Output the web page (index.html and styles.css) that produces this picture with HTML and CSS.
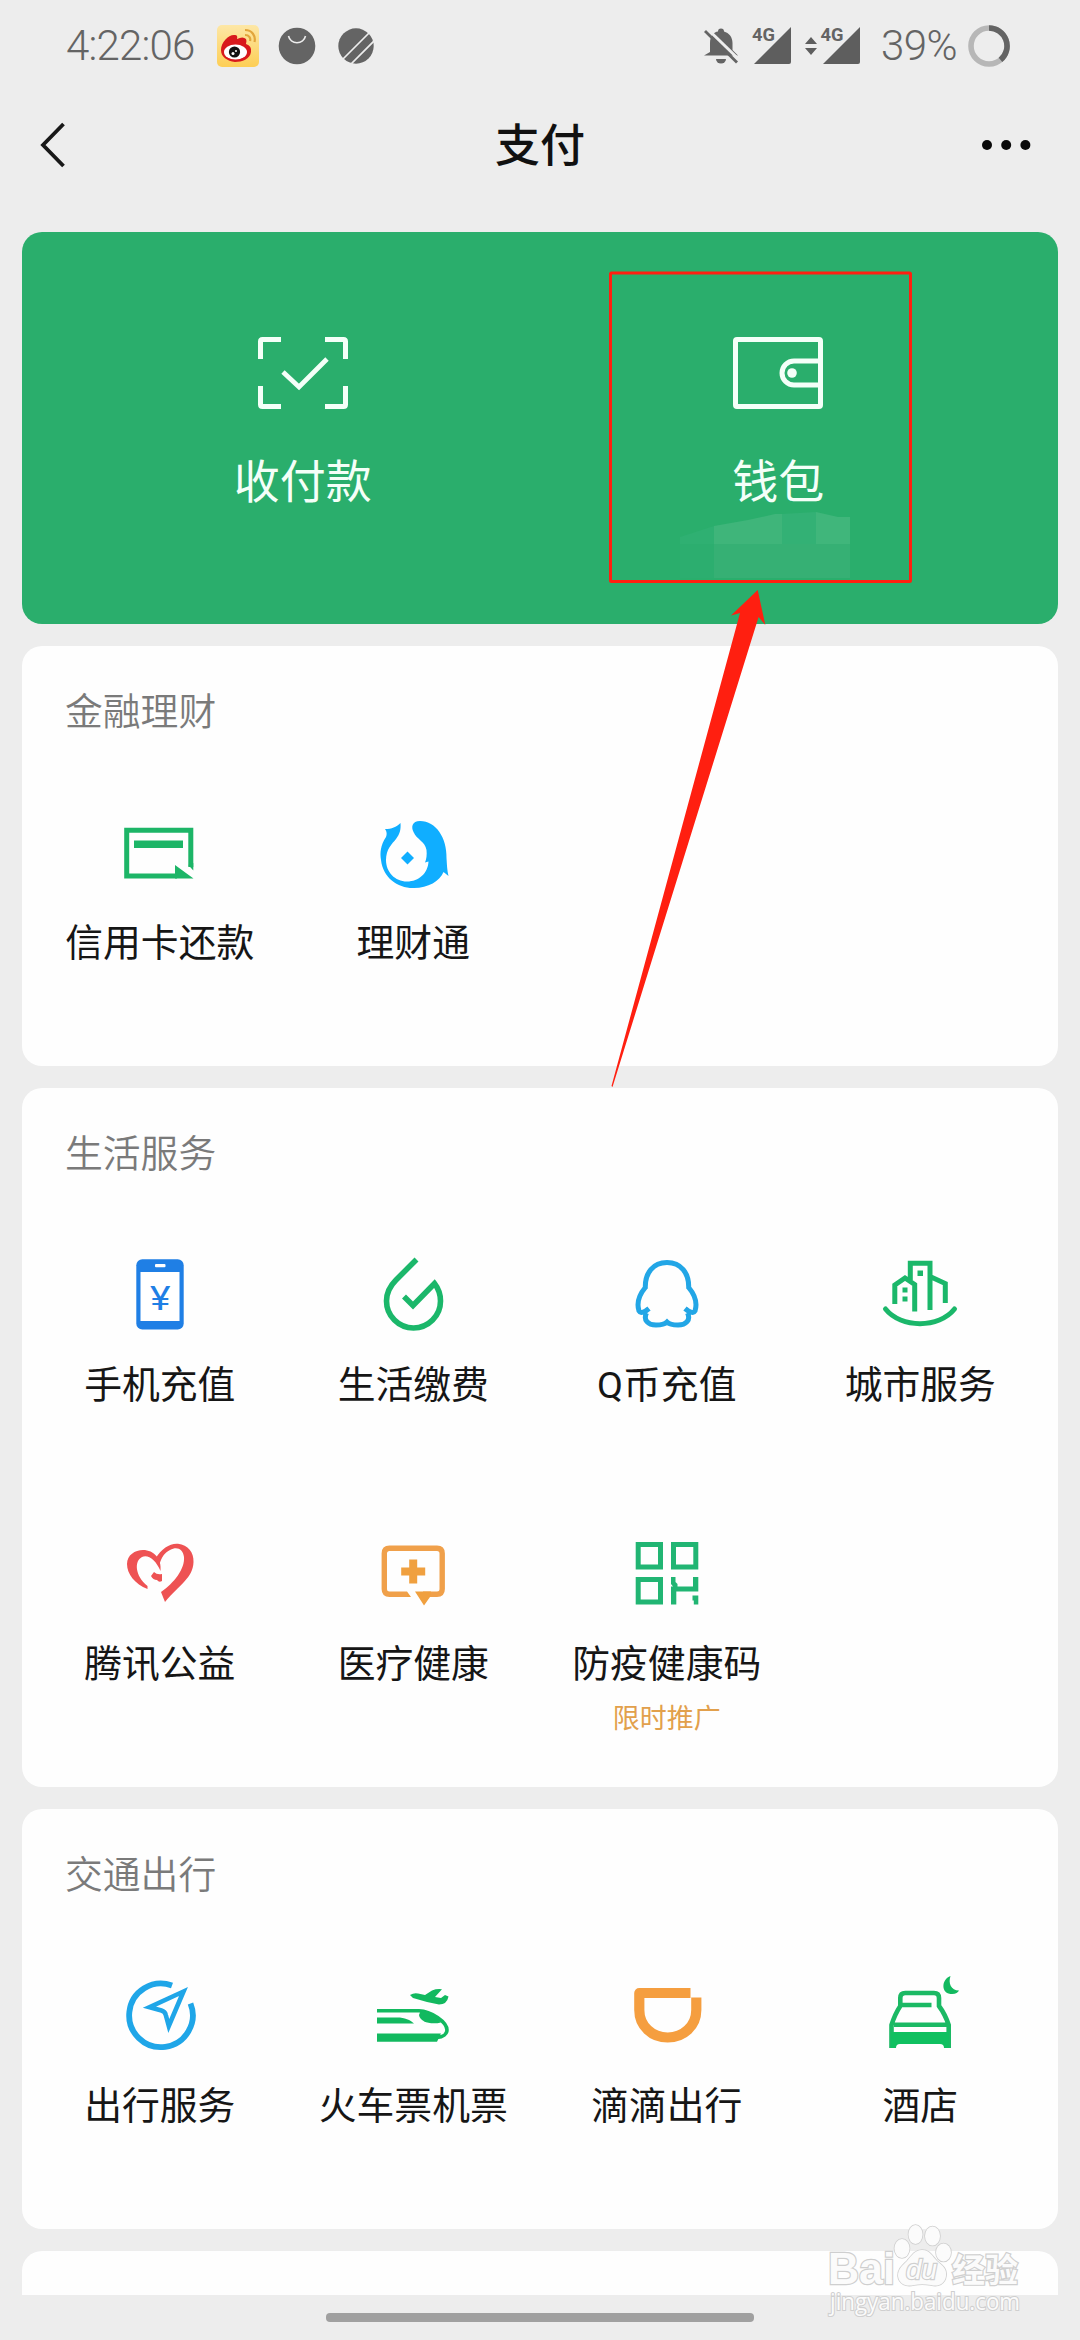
FILE: index.html
```html
<!DOCTYPE html>
<html lang="zh-CN">
<head>
<meta charset="utf-8">
<title>支付</title>
<link rel="stylesheet" href="styles.css">
</head>
<body>
<div class="screen">
  <div class="status">
    <div class="status-left">
      <span class="clock">4:22:06</span>
      <svg class="app-weibo" width="42" height="42" viewBox="0 0 42 42">
        <defs><linearGradient id="wb" x1="0" y1="0" x2="0" y2="1"><stop offset="0" stop-color="#fde7a6"/><stop offset="1" stop-color="#fdce55"/></linearGradient></defs>
        <rect width="42" height="42" rx="5" fill="url(#wb)"/>
        <path d="M4 25C4 17 12 9 18 10q3 0 2 4 6-3 9 0 1 2 0 5 6 2 5 8C33 34 25 37 18 37 10 36 4 32 4 25z" fill="#d8191c"/>
        <ellipse cx="18.500" cy="27" rx="11.500" ry="7.500" fill="#fff"/>
        <circle cx="17.500" cy="27" r="5.600" fill="#111"/>
        <circle cx="16" cy="28.500" r="1.500" fill="#fff"/><circle cx="19" cy="26" r="1" fill="#fff"/>
        <path d="M28 5c7 0 11 6 9.500 12M28 10c4 0 6 3 5 6" fill="none" stroke="#e2a53c" stroke-width="2.200"/>
      </svg>
      <svg class="app-bag" width="38" height="38" viewBox="0 0 38 38">
        <circle cx="19" cy="19" r="18.300" fill="#646464"/>
        <path d="M10.500 9a8.700 8.500 0 0 0 17 0" fill="none" stroke="#ededed" stroke-width="1.600"/>
      </svg>
      <svg class="app-lines" width="38" height="38" viewBox="0 0 38 38">
        <circle cx="19" cy="19" r="17.700" fill="#646464"/>
        <path d="M6 32L34 4M13 38L39 12" stroke="#ededed" stroke-width="1.700"/>
      </svg>
    </div>
    <div class="status-right">
      <svg class="bell" width="36" height="36" viewBox="0 0 36 36">
        <path d="M7 24V15C7 8 11 4 15 3.500a3 3 0 0 1 6 0C26 5 29.500 9 29.500 15V22L35 27.500H1z" fill="#646464"/>
        <path d="M13 31h10a5 4.500 0 0 1-10 0z" fill="#646464"/>
        <path d="M4 .500L36.500 32" stroke="#ededed" stroke-width="3"/>
        <path d="M2 3L34 34.500" stroke="#646464" stroke-width="2.800"/>
      </svg>
      <svg class="sim1" width="40" height="40" viewBox="0 0 40 40">
        <path d="M1 38L38 1V36Q38 38 36 38z" fill="#5e5e5e"/>
        <text class="net" x="-1" y="15" textLength="23" lengthAdjust="spacingAndGlyphs">4G</text>
      </svg>
      <svg class="updown" width="14" height="20" viewBox="0 0 14 20"><path d="M1 8L7 1l6 7zM1 12h12l-6 7z" fill="#5e5e5e"/></svg>
      <svg class="sim2" width="40" height="40" viewBox="0 0 40 40">
        <path d="M1 38L38 1V36Q38 38 36 38z" fill="#5e5e5e"/>
        <text class="net" x="-1.500" y="15" textLength="23" lengthAdjust="spacingAndGlyphs">4G</text>
      </svg>
      <span class="battery">39%</span>
      <svg class="ring" width="42" height="42" viewBox="0 0 42 42">
        <circle cx="21" cy="21" r="18" fill="none" stroke="#b7b7b7" stroke-width="5.600"/>
        <path d="M21 3A18 18 0 0 1 32.500 34.900" fill="none" stroke="#646464" stroke-width="5.600"/>
      </svg>
    </div>
  </div>

  <div class="nav">
    <svg width="30" height="50" viewBox="0 0 30 50"><path d="M25.500 4L5 25l20.500 21" fill="none" stroke="#181818" stroke-width="3.800"/></svg>
    <h1>支付</h1>
    <svg width="52" height="14" viewBox="0 0 52 14"><g fill="#0a0a0a"><circle cx="7" cy="7" r="5"/><circle cx="26.200" cy="7" r="5"/><circle cx="45.400" cy="7" r="5"/></g></svg>
  </div>

  <main class="cards">
    <section class="pay">
      <div class="pay-item">
        <svg width="100" height="76" viewBox="0 0 100 76" fill="none" stroke="#f4fff8" stroke-width="5">
          <path d="M7.500 24V6.500Q7.500 4.500 9.500 4.500H28M72 4.500h18.500q2 0 2 2V24M92.500 51V69.500q0 2-2 2H72M28 71.500H9.500q-2 0-2-2V51"/>
          <path d="M30 37L46 52 74 24" stroke-width="4.800"/>
        </svg>
        <span>收付款</span>
      </div>
      <div class="pay-item">
        <svg width="100" height="76" viewBox="0 0 100 76" fill="none" stroke="#f4fff8" stroke-width="5">
          <rect x="7.500" y="4.500" width="85" height="67" rx="1.500"/>
          <path d="M92 26H66a12 12 0 0 0 0 24H92" stroke-width="5"/>
          <circle cx="64" cy="38" r="4.800" fill="#f4fff8" stroke="none"/>
        </svg>
        <span>钱包</span>
      </div>
      <svg class="mosaic" width="172" height="68" viewBox="680 511 172 68">
        <path d="M680 537l34-11v18h-34z" fill="#2fb072"/>
        <path d="M714 526l34-6 27-6h7v30h-68z" fill="#3fb57a"/>
        <path d="M782 514l34-2v32h-34z" fill="#33b175"/>
        <path d="M816 512l22 5h12v27h-34z" fill="#40b67b"/>
        <path d="M680 544h34v34h-34z" fill="#2cae6f"/>
        <path d="M714 544h136v34H714z" fill="#36b074"/>
      </svg>
    </section>

    <section class="card">
      <h2>金融理财</h2>
      <div class="grid">
        <div class="item">
          <svg class="icon" viewBox="0 0 100 100">
            <path d="M80.800 64V27.300H16.700V73H67" fill="none" stroke="#1db567" stroke-width="5"/>
            <path d="M78.300 62l5 5.500V60z M65 62l18.500 13.500H65z M24 37.500h49V45H24z" fill="#1db567"/>
          </svg>
          <span>信用卡还款</span>
        </div>
        <div class="item">
          <svg class="icon" viewBox="0 0 100 100" fill="#10aeff">
            <path d="M37.500 20C33 24 29 26 22 26C24 29 24 31 23 34C17.500 42 16.800 50 18 57C20 75 35 85.500 51 85C65 85 77 78 80.500 69L85.500 73C84 66 84 62 83.500 55C84 35 73 18 57 18C49 18 48 24 50.500 29C54 37 62 38 63.500 47C64 52 63.500 56 62 59.500L65.500 58.500C65 70 56 78.500 44 78.500C32 78.500 23 69 23 57C23 46 29 41 33 36C37 31 38 26 37.500 20z"/>
            <path d="M44.500 48.500l6.500 6.500-6.500 6.500L38 55z"/>
          </svg>
          <span>理财通</span>
        </div>
      </div>
    </section>

    <section class="card">
      <h2>生活服务</h2>
      <div class="grid">
        <div class="item">
          <svg class="icon" viewBox="0 0 100 100">
            <rect x="26.300" y="14.300" width="47.400" height="70.200" rx="6" fill="#1f7fe5"/>
            <path d="M30.500 27h39v49h-39z" fill="#fff"/>
            <rect x="45" y="19" width="10.500" height="3.200" rx="1" fill="#fff"/>
            <text class="yen" x="40" y="64.500" textLength="20.500" lengthAdjust="spacingAndGlyphs">¥</text>
          </svg>
          <span>手机充值</span>
        </div>
        <div class="item">
          <svg class="icon" viewBox="0 0 100 100" fill="none" stroke="#1bb76a" stroke-width="5.600">
            <path d="M53.500 14.500L33 35C26 42 23.500 49 23.500 56A27 27 0 0 0 77.500 56C77.500 49 75 43 71.500 38.500L50 60.500 41 51.500"/>
          </svg>
          <span>生活缴费</span>
        </div>
        <div class="item">
          <svg class="icon" viewBox="0 0 100 100" fill="none" stroke="#22a6e6" stroke-width="5">
            <path d="M50 17.500C36 17.500 28 28 28.300 42.500C22 50 19.500 58 22 66C23.500 69 28 67 32 63.500M50 17.500C64 17.500 72 28 71.700 42.500C78 50 80.500 58 78 66C76.500 69 72 67 68 63.500M29.500 68C26 75 31 80 39 80C44 80 48 79 50 77C52 79 56 80 61 80C69 80 74 75 70.500 68"/>
          </svg>
          <span>Q币充值</span>
        </div>
        <div class="item">
          <svg class="icon" viewBox="0 0 100 100">
            <g fill="none" stroke="#1bb76a" stroke-width="5">
              <path d="M24.800 59V40L35 33 44.700 39.500V66.500M40.300 35V18.300H60V65M60 31.500L75.300 38.500V58"/>
              <path d="M15.500 64C31 83.500 69 83.500 84.500 64" stroke-linecap="round"/>
            </g>
            <path d="M32.500 42.500h5v5h-5zM32.500 51.500h5v5h-5zM47.500 25.500h5.500v5.500h-5.500z" fill="#1bb76a"/>
          </svg>
          <span>城市服务</span>
        </div>
        <div class="item">
          <svg class="icon" viewBox="0 0 100 100" fill="#ee5253">
            <path d="M37.500 65C25 60 17 50 17 40C17 31 25 26 33 26C44 26 52 35 50.500 47C46 36 38 30 32 33C24 37 25 52 37.500 62z"/>
            <path d="M45 35C52 24 60 19 68 19.700C78 21 84 28 83.500 38C83 54 70 60 55 78L51 68C64 59 75 45 74 33C73 25 67 22 60 26C54 29 52 33 49.500 40z"/>
            <path d="M41 52l3-4q3 3 8 2v7q-3 2-5-1-4 0-6-4z"/>
          </svg>
          <span>腾讯公益</span>
        </div>
        <div class="item">
          <svg class="icon" viewBox="0 0 100 100">
            <path d="M44 70.200H26.500q-5.200 0-5.200-5.200V29.500q0-5.200 5.200-5.200H74q5.200 0 5.200 5.200V65q0 5.200-5.200 5.200H60" fill="none" stroke="#f0a04a" stroke-width="5.400"/>
            <path d="M44 67.500v5.400h4zM52 67.500h16l-1 5.400-6 8.500z M46.200 35.500h8v8h8v8h-8v8h-8v-8h-8v-8h8z" fill="#f0a03f"/>
          </svg>
          <span>医疗健康</span>
        </div>
        <div class="item">
          <svg class="icon" viewBox="0 0 100 100">
            <path d="M21.200 20.500H43.500V43H21.200zM56.500 20.500H78.800V43H56.500zM21.200 55.500H43.500V78H21.200z" fill="none" stroke="#21b573" stroke-width="5"/>
            <path d="M54 53h4.500v5l2 2v2.500H76V53h5.300v14.500H59.300V80.500H54V62.500h2L54 60zM75.500 71.500h5.800v9h-4.500v-4h-1.300z" fill="#21b573"/>
          </svg>
          <span>防疫健康码</span>
          <em>限时推广</em>
        </div>
      </div>
    </section>

    <section class="card">
      <h2>交通出行</h2>
      <div class="grid">
        <div class="item">
          <svg class="icon" viewBox="0 0 100 100" fill="none" stroke="#1fa6e8">
            <path d="M62 19.500A31.800 31.800 0 1 0 80.500 37.500" stroke-width="5.800"/>
            <path d="M73.500 25.500L39.500 41.200 51.500 44.500Q55 45.500 55.800 49L58.800 60z" stroke-width="4.600"/>
          </svg>
          <span>出行服务</span>
        </div>
        <div class="item">
          <svg class="icon" viewBox="0 0 100 100" fill="#12b95f">
            <path d="M14 44.700H56C68 45 84 56 84 64C84 68 80 71 74 71.500" fill="none" stroke="#12b95f" stroke-width="3.600"/>
            <path d="M58 44C66 45 73 50 78 56.500C68 59 57 56 56 49z"/>
            <path d="M14 51.500H34C42 51.500 47 54 51 57.500H14z"/>
            <path d="M14 67.500H78L74 75.700H14z"/>
            <path d="M47 29Q51 26.500 55 27.500L62 29 69 24.500Q74 22.500 79 23.300L72 31 78 32 82 29 85.500 30.500Q84 38.500 76 38.500L64 36 50 32z"/>
          </svg>
          <span>火车票机票</span>
        </div>
        <div class="item">
          <svg class="icon" viewBox="0 0 100 100" fill="none" stroke="#f59e3f" stroke-width="10.200" stroke-linejoin="round">
            <path d="M73.500 27H22.300V44C22.300 60 35 71.500 50.700 71.500S79.300 60 79.300 44V31.500"/>
          </svg>
          <span>滴滴出行</span>
        </div>
        <div class="item">
          <svg class="icon" viewBox="0 0 100 100">
            <g fill="none" stroke="#1bb964" stroke-width="4.600">
              <path d="M21.500 82V59Q25 48 30.300 40V32q0-5 5-5H64q5 0 5 5V40Q75 48 78.700 59V82M30 39H61.500M24 58.700H77"/>
            </g>
            <path d="M21 66q0 0 5 0H74q4 0 5 0V82H74Q74 78 70 78H30Q26 78 26 82H21z" fill="#10c060"/>
            <path d="M80.500 10C72 13 71 25 78.500 27.500C84 29 88 27 89 24.500C81 24.500 78 17 80.500 10z" fill="#12b95f"/>
          </svg>
          <span>酒店</span>
        </div>
      </div>
    </section>

    <section class="card card-next"></section>
  </main>
  <div class="home-bar"></div>

  <svg class="marks" width="1080" height="2340" viewBox="0 0 1080 2340">
    <rect x="610.500" y="273" width="300" height="308.500" rx="1" fill="none" stroke="#ff1f10" stroke-width="3"/>
    <path d="M757.700 590L765.300 625 758.600 617 612.500 1087 611.500 1086 740 613 731 615.500z" fill="#ff1f10"/>
    <g class="wm">
      <text class="wm-brand" x="828" y="2284" textLength="67" lengthAdjust="spacingAndGlyphs">Bai</text>
      <ellipse cx="902" cy="2248.500" rx="7.500" ry="9.500"/>
      <ellipse cx="915.500" cy="2234.500" rx="7" ry="9.500"/>
      <ellipse cx="932.500" cy="2236" rx="7.500" ry="9.500"/>
      <ellipse cx="943.500" cy="2252.500" rx="7.500" ry="9"/>
      <path d="M922 2250c8 0 10 6 15 11 6 5 10 8 9 15-1 8-8 11-15 9-6-1-12-1-17 0-8 2-15-1-16-9 0-7 4-10 9-15 5-6 8-11 15-11z"/>
      <text class="wm-du" x="906" y="2279" textLength="31" lengthAdjust="spacingAndGlyphs">du</text>
      <text class="wm-cn" x="952" y="2282" textLength="66" lengthAdjust="spacingAndGlyphs">经验</text>
      <text class="wm-url" x="830" y="2310" textLength="190" lengthAdjust="spacingAndGlyphs">jingyan.baidu.com</text>
    </g>
  </svg>
</div>
</body>
</html>
```
FILE: styles.css
```css
* { box-sizing: border-box; }
body { margin: 0; background: #ededed; font-family: Roboto, "Noto Sans CJK SC", sans-serif; }
svg { display: block; flex: none; }
.screen { position: relative; width: 1080px; height: 2340px; overflow: hidden; display: flex; flex-direction: column; background: #ededed; }

.status { height: 92px; padding: 0 70px 0 66px; display: flex; justify-content: space-between; align-items: center; }
.status-left, .status-right { display: flex; align-items: center; }
.clock, .battery { font-weight: 300; font-size: 42px; line-height: 48px; color: #646464; }
.clock { width: 151px; letter-spacing: -0.8px; }
.app-bag { margin-left: 19px; }
.app-lines { margin-left: 21px; }
.bell { margin-right: 14px; }
.sim1, .sim2 { overflow: visible; }
.net { font-family: Roboto, sans-serif; font-weight: 700; font-size: 19px; fill: #646464; }
.updown { margin: 0 4px 0 11px; }
.battery { margin: 0 12px 0 19px; width: 75px; letter-spacing: -0.6px; }

.nav { height: 106px; padding: 0 48px 0 38px; display: grid; grid-template-columns: 1fr auto 1fr; align-items: center; }
.nav svg:last-child { justify-self: end; }
.nav h1 { margin: 0; padding: 3px 10px 0 0; font-weight: 500; font-size: 45px; line-height: 60px; color: #111; transform: translateX(10px); }

.cards { padding: 34px 22px 0; display: flex; flex-direction: column; gap: 22px; }
.pay { position: relative; height: 392px; border-radius: 20px; background: #2aae6c; padding: 103px 42px 0 43px; display: grid; grid-template-columns: 1fr 1fr; align-content: start; }
.pay-item { display: flex; flex-direction: column; align-items: center; gap: 41px; font-size: 46px; line-height: 60px; color: #f4fff8; }
.mosaic { position: absolute; left: 658px; top: 279px; }

.card { height: 420px; border-radius: 20px; background: #fefefe; padding: 0 11px; }
.card:has(em) { height: 699px; }
.card h2 { margin: 0; height: 141px; padding: 36px 33px 0 32px; font-weight: 350; font-size: 37.8px; line-height: 60px; color: #7a7a7a; }
.grid { display: grid; grid-template-columns: repeat(4, 1fr); grid-auto-rows: 279px; }
.item { padding-top: 16px; display: flex; flex-direction: column; align-items: center; white-space: nowrap; }
.icon { width: 100px; height: 100px; }
.item span { margin-top: 15px; font-size: 37.8px; line-height: 50px; color: #161616; }
.item em { margin-top: 12px; font-style: normal; font-size: 27px; line-height: 36px; color: #e2a04c; }
.yen { font-family: Roboto, sans-serif; font-weight: 400; font-size: 34px; fill: #1f7fe5; }
.card-next { height: 44px; border-radius: 20px 20px 0 0; }
.home-bar { width: 428px; height: 9px; margin: 18px auto 0; border-radius: 4px; background: #a0a0a0; }

.marks { position: absolute; left: 0; top: 0; }
.wm { fill: #fbfbfb; stroke: #cfcfcf; stroke-width: 1.6; paint-order: stroke; }
.wm-brand { font: 700 44px "Liberation Sans", sans-serif; stroke-width: 2.4; }
.wm-du { font: italic 400 28px "Liberation Sans", sans-serif; stroke-width: 2.4; }
.wm-cn { font: 700 33px "Noto Sans CJK SC", sans-serif; stroke-width: 2.4; }
.wm-url { font: 400 24px "Open Sans", sans-serif; stroke-width: 2.2; }
```
